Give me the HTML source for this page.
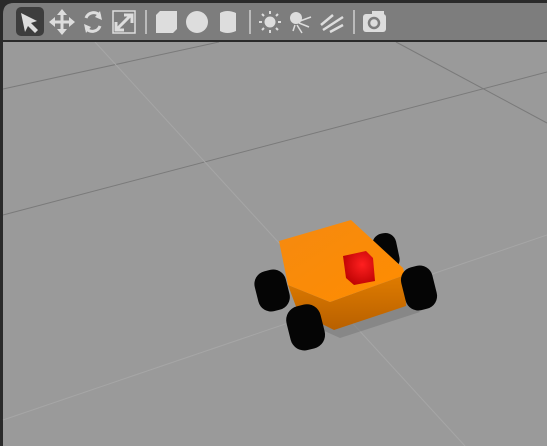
<!DOCTYPE html>
<html><head><style>
html,body{margin:0;padding:0;width:547px;height:446px;overflow:hidden;background:#2a2a2a}
</style></head><body>
<svg width="547" height="446" viewBox="0 0 547 446" xmlns="http://www.w3.org/2000/svg" style="display:block">
<defs>
<linearGradient id="top" x1="0" y1="0" x2="1" y2="1"><stop offset="0" stop-color="#f58a10"/><stop offset="1" stop-color="#ff8c00"/></linearGradient>
<linearGradient id="front" x1="0" y1="0" x2="0" y2="1"><stop offset="0" stop-color="#e07c00"/><stop offset="1" stop-color="#b86000"/></linearGradient>
<radialGradient id="red" cx="0.6" cy="0.4" r="0.7"><stop offset="0" stop-color="#ff2020"/><stop offset="1" stop-color="#b80000"/></radialGradient>
</defs>
<rect x="0" y="0" width="547" height="446" fill="#2a2a2a"/>
<path d="M3 14 Q3 3 14 3 H547 V40 H3 Z" fill="#7d7d7d"/>
<rect x="3" y="42" width="544" height="404" fill="#9a9a9a"/>
<g stroke="#7a7a7a" stroke-width="1">
<line x1="3" y1="89" x2="219" y2="42"/>
<line x1="3" y1="215" x2="547" y2="72"/>
<line x1="396" y1="42" x2="547" y2="123"/>
</g>
<g stroke="#a6a6a6" stroke-width="1">
<line x1="95" y1="42" x2="465" y2="446"/>
<line x1="3" y1="420" x2="547" y2="235"/>
</g>
<path d="M300 320 L340 338 L420 312 L410 300 L330 325 Z" fill="#7c7c7c" opacity="0.6"/>
<!-- wheels behind -->
<rect x="374" y="233" width="24" height="38" rx="11" fill="#050505" transform="rotate(-12 386 252)"/>
<rect x="256" y="270" width="32" height="41" rx="13" fill="#050505" transform="rotate(-14 272 290)"/>
<!-- body -->
<path d="M288 285 L330 302 L405 275 L406 306 L334 330 L298 312 Z" fill="url(#front)"/>
<path d="M279 241 L351 220 L403 268 L405 275 L330 302 L288 285 Z" fill="url(#top)"/>
<!-- front wheels -->
<rect x="403" y="266" width="32" height="44" rx="13" fill="#050505" transform="rotate(-14 419 288)"/>
<rect x="288" y="305" width="35" height="45" rx="14" fill="#050505" transform="rotate(-14 305 327)"/>
<path d="M343 256 L366 251 L373 258 L375 281 L354 285 L346 278 Z" fill="url(#red)"/>
<!-- toolbar -->
<rect x="16" y="7" width="28" height="29" rx="5" fill="#3d3d3d"/>
<path d="M21 13 L37 21 L31 23 L38 30 L35 33 L28 26 L25 32 Z" fill="#ddd"/>
<g fill="#ddd" stroke="#ddd">
<path d="M62 11 V33 M51 22 H73" stroke-width="3"/>
<path d="M62 9 L57 15 H67 Z M62 35 L57 29 H67 Z M49 22 L55 17 V27 Z M75 22 L69 17 V27 Z" stroke="none"/>
</g>
<g fill="none" stroke="#ddd" stroke-width="3">
<path d="M86 18 A8 8 0 0 1 100 16"/><path d="M100 26 A8 8 0 0 1 86 28"/>
</g>
<path d="M100 11 L102 20 L95 17 Z M86 33 L84 24 L91 27 Z" fill="#ddd"/>
<rect x="113" y="11" width="22" height="22" fill="none" stroke="#ddd" stroke-width="1.5"/>
<path d="M117 29 L131 15 M124 15 H132 V23 M116 22 V30 H124" fill="none" stroke="#ddd" stroke-width="3"/>
<rect x="145" y="10" width="2" height="24" fill="#bbb"/>
<path d="M156 15 L160 11 H177 V29 L173 33 H156 Z" fill="#ddd"/>
<circle cx="197" cy="22" r="11" fill="#ddd"/>
<path d="M220 13 Q227 9 236 13 V31 Q227 35 220 31 Z" fill="#ddd"/>
<rect x="249" y="10" width="2" height="24" fill="#bbb"/>
<circle cx="270" cy="22" r="5.5" fill="#ddd"/>
<g stroke="#ddd" stroke-width="2"><path d="M270 11 V14 M270 30 V33 M259 22 H262 M278 22 H281 M262 14 L264 16 M276 28 L278 30 M278 14 L276 16 M264 28 L262 30"/></g>
<circle cx="296" cy="18" r="6" fill="#ddd"/>
<g stroke="#ddd" stroke-width="1.5"><path d="M300 21 L311 17 M299 23 L309 27 M297 25 L302 33 M295 25 L293 31"/></g>
<g stroke="#ddd" stroke-width="2.5"><path d="M321 25 L333 15 M323 30 L343 17 M330 32 L343 25"/></g>
<rect x="353" y="10" width="2" height="24" fill="#bbb"/>
<rect x="363" y="14" width="23" height="18" rx="3" fill="#ddd"/>
<rect x="372" y="11" width="12" height="5" fill="#ddd"/>
<circle cx="374" cy="23" r="5" fill="none" stroke="#7d7d7d" stroke-width="2.5"/>
<rect x="3" y="40" width="544" height="2" fill="#2a2a2a"/>
</svg>
</body></html>
